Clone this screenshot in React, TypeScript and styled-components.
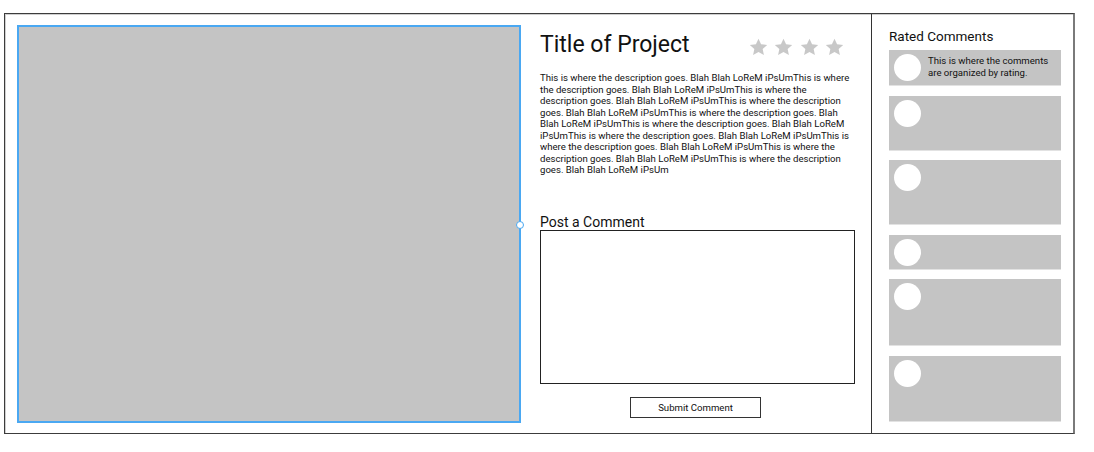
import React from "react";
import styled, { createGlobalStyle } from "styled-components";

const Global = createGlobalStyle`
  html, body { margin: 0; padding: 0; background: #fff; }
  body { font-family: Roboto, "Liberation Sans", sans-serif; color: #111; }
  * { box-sizing: border-box; }
`;

const Frame = styled.div`
  margin: 13px 0 0 4px;
  width: 1071px;
  height: 421px;
  border: 1px solid #3c3c3c;
  border-right: 2px solid #7a7a7a;
  box-shadow: inset 1px 1px 0 #cfcfcf;
  display: flex;
`;

const ImagePane = styled.div`
  position: relative;
  margin: 11px 0 10px 12px;
  width: 504px;
  background: #c4c4c4;
  border: 2px solid #4aa8f2;
`;

const Handle = styled.span`
  position: absolute;
  right: -5px;
  top: 50%;
  width: 8px;
  height: 8px;
  margin-top: -3px;
  border-radius: 50%;
  background: #fff;
  border: 1.5px solid #4aa8f2;
`;

const Middle = styled.div`
  width: 350px;
  padding: 16px 16px 0 19px;
  display: flex;
  flex-direction: column;
`;

const TitleRow = styled.div`
  display: flex;
  align-items: center;
  justify-content: space-between;
  height: 28px;
`;

const Title = styled.h1`
  margin: 0;
  font-size: 23px;
  font-weight: 400;
  color: #111;
`;

const Stars = styled.div`
  display: flex;
  gap: 6.5px;
  margin-right: 11px;
  margin-top: 5px;
`;

const Star = () => (
  <svg width="19" height="18" viewBox="0 0 24 23">
    <path
      d="M12 0.8l3.3 7.1 7.8 0.9-5.8 5.3 1.6 7.7L12 17.9l-6.9 3.9 1.6-7.7L0.9 8.8l7.8-0.9z"
      fill="#c8c8c8"
    />
  </svg>
);

const Description = styled.p`
  margin: 14px 0 0 0;
  width: 314px;
  font-size: 9.6px;
  line-height: 11.5px;
  color: #111;
`;

const Label = styled.div`
  margin-top: 38px;
  font-size: 14px;
  line-height: 16px;
  color: #111;
`;

const CommentBox = styled.textarea`
  display: block;
  width: 315px;
  height: 154px;
  margin-top: 0;
  border: 1px solid #222;
  border-radius: 0;
  resize: none;
  background: #fff;
  outline: none;
`;

const SubmitButton = styled.button`
  align-self: center;
  margin: 13px 0 0 -4px;
  width: 131px;
  height: 21px;
  border: 1px solid #333;
  background: #fff;
  font-family: Roboto, "Liberation Sans", sans-serif;
  font-size: 9.6px;
  color: #111;
  padding: 0;
`;

const Side = styled.div`
  flex: 1;
  border-left: 1px solid #333;
  padding: 14px 12px 0 17px;
  display: flex;
  flex-direction: column;
`;

const SideTitle = styled.div`
  font-size: 13.5px;
  line-height: 16px;
  color: #111;
  margin-bottom: 6px;
`;

const CardList = styled.div`
  display: flex;
  flex-direction: column;
  gap: 9.6px;
`;

const Card = styled.div<{ $h: number }>`
  height: ${(p) => p.$h}px;
  background: #c4c4c4;
  border-bottom: 1px solid #e2e2e2;
  display: flex;
  align-items: flex-start;
  padding: 4px 0 0 5px;
  gap: 7px;
`;

const Avatar = styled.span`
  flex: none;
  width: 27px;
  height: 27px;
  border-radius: 50%;
  background: #fff;
`;

const CardText = styled.div`
  font-size: 9.6px;
  line-height: 11.5px;
  color: #111;
  padding-top: 1px;
`;

const desc = "This is where the description goes. Blah Blah LoReM iPsUm".repeat(10);

const cards = [36, 55, 65, 35, 67, 66];

export default function App() {
  return (
    <>
      <Global />
      <Frame>
        <ImagePane>
          <Handle />
        </ImagePane>
        <Middle>
          <TitleRow>
            <Title>Title of Project</Title>
            <Stars>
              <Star />
              <Star />
              <Star />
              <Star />
            </Stars>
          </TitleRow>
          <Description>{desc}</Description>
          <Label>Post a Comment</Label>
          <CommentBox />
          <SubmitButton>Submit Comment</SubmitButton>
        </Middle>
        <Side>
          <SideTitle>Rated Comments</SideTitle>
          <CardList>
            {cards.map((h, i) => (
              <Card key={i} $h={h}>
                <Avatar />
                {i === 0 && (
                  <CardText>
                    This is where the comments
                    <br />
                    are organized by rating.
                  </CardText>
                )}
              </Card>
            ))}
          </CardList>
        </Side>
      </Frame>
    </>
  );
}
